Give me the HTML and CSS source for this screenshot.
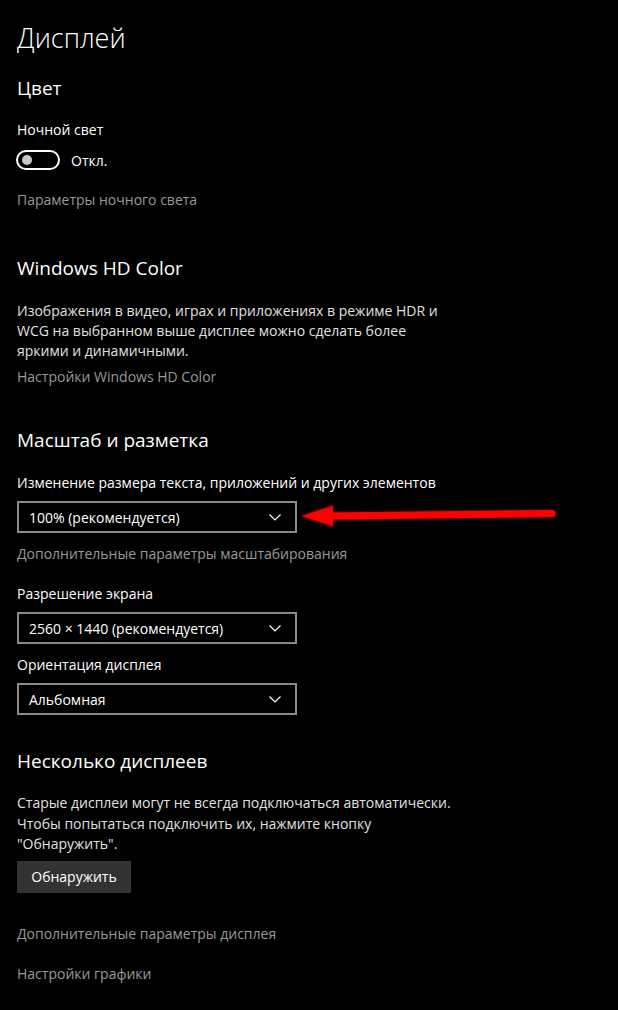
FILE: index.html
```html
<!DOCTYPE html>
<html lang="ru">
<head>
    <meta charset="UTF-8">
    <meta name="viewport" content="width=device-width, initial-scale=1.0">
    <title>Дисплей</title>
    <link rel="stylesheet" href="styles.css">
</head>
<body>
    <div class="page">
        <h1 class="title">Дисплей</h1>

        <h2 class="section s-color">Цвет</h2>
        <div class="label l-night">Ночной свет</div>
        <div class="toggle-row">
            <div class="toggle"><div class="knob"></div></div>
            <span>Откл.</span>
        </div>
        <div class="link l-nightset">Параметры ночного света</div>

        <h2 class="section s-hd">Windows HD Color</h2>
        <p class="text t-hd">Изображения в видео, играх и приложениях в режиме HDR и WCG на выбранном выше дисплее можно сделать более яркими и динамичными.</p>
        <div class="link l-hd">Настройки Windows HD Color</div>

        <h2 class="section s-scale">Масштаб и разметка</h2>
        <div class="label l-size">Изменение размера текста, приложений и других элементов</div>
        <div class="select-wrap">
            <div class="select">
                <span>100% (рекомендуется)</span>
                <svg class="chev" width="12" height="7" viewBox="0 0 12 7"><path d="M0.5 0.5 L6 6 L11.5 0.5" fill="none" stroke="#fff" stroke-width="1.2"/></svg>
            </div>
            <svg class="arrow" width="262" height="34" viewBox="0 0 262 34">
                <defs>
                    <filter id="glow" x="-10%" y="-50%" width="120%" height="200%">
                        <feGaussianBlur stdDeviation="1.2"/>
                    </filter>
                </defs>
                <g filter="url(#glow)" opacity="0.7">
                    <path d="M33 13.5 L252 11 L252 18 L33 20.5 Z" fill="#ff1010"/>
                    <circle cx="252" cy="14.5" r="3.5" fill="#ff1010"/>
                    <path d="M1 17 L33 6 L33 28 Z" fill="#ff1010"/>
                </g>
                <path d="M33 13.5 L252 11 L252 18 L33 20.5 Z" fill="#f00"/>
                <circle cx="252" cy="14.5" r="3.5" fill="#f00"/>
                <path d="M2 17 L33 7 L33 27 Z" fill="#f00"/>
            </svg>
        </div>
        <div class="link l-scale">Дополнительные параметры масштабирования</div>

        <div class="label l-res">Разрешение экрана</div>
        <div class="select">
            <span>2560 × 1440 (рекомендуется)</span>
            <svg class="chev" width="12" height="7" viewBox="0 0 12 7"><path d="M0.5 0.5 L6 6 L11.5 0.5" fill="none" stroke="#fff" stroke-width="1.2"/></svg>
        </div>

        <div class="label l-orient">Ориентация дисплея</div>
        <div class="select">
            <span>Альбомная</span>
            <svg class="chev" width="12" height="7" viewBox="0 0 12 7"><path d="M0.5 0.5 L6 6 L11.5 0.5" fill="none" stroke="#fff" stroke-width="1.2"/></svg>
        </div>

        <h2 class="section s-multi">Несколько дисплеев</h2>
        <p class="text t-multi">Старые дисплеи могут не всегда подключаться автоматически. Чтобы попытаться подключить их, нажмите кнопку "Обнаружить".</p>
        <div class="button">Обнаружить</div>

        <div class="link l-adv">Дополнительные параметры дисплея</div>
        <div class="link l-gfx">Настройки графики</div>
    </div>
</body>
</html>
```

FILE: styles.css
```css
body {
    margin: 0;
    background-color: #000;
    color: #fff;
    font-family: "Open Sans", "Noto Sans", sans-serif;
}
.page {
    padding: 20px 0 0 17px;
}
.title {
    margin: 0;
    font-size: 27px;
    font-weight: 300;
    line-height: 36px;
}
.section {
    margin: 0;
    font-size: 19px;
    font-weight: 400;
    line-height: 28px;
}
.label, .link, .text {
    font-size: 14px;
    line-height: 20px;
}
.link {
    color: #9a9a9a;
}
.text {
    margin: 0;
    color: #e0e0e0;
    width: 450px;
}
.t-hd {
    margin-top: 19px;
    width: 428px;
}
.s-color { margin-top: 18px; }
.l-night { margin-top: 18px; }
.toggle-row {
    margin-top: 10px;
    display: flex;
    align-items: center;
    gap: 11px;
    height: 20px;
    font-size: 14px;
}
.toggle {
    width: 36px;
    height: 16px;
    border: 2px solid #fff;
    border-radius: 10px;
    display: flex;
    align-items: center;
    padding-left: 4px;
    box-sizing: content-box;
    margin-left: -1px;
}
.knob {
    width: 10px;
    height: 10px;
    border-radius: 50%;
    background-color: #c8c8c8;
}
.l-nightset { margin-top: 20px; }
.s-hd { margin-top: 44px; }
.l-hd { margin-top: 6px; }
.s-scale { margin-top: 39px; }
.l-size { margin-top: 19px; }
.select-wrap {
    position: relative;
    margin-top: 8px;
}
.select {
    width: 252px;
    height: 28px;
    border: 2px solid #8a8a8a;
    display: flex;
    align-items: center;
    justify-content: space-between;
    padding: 0 14px 0 10px;
    box-sizing: content-box;
    font-size: 14px;
}
.chev {
    display: block;
}
.arrow {
    position: absolute;
    left: 283px;
    top: -2px;
}
.l-scale { margin-top: 11px; }
.l-res { margin-top: 20px; }
.l-res + .select { margin-top: 8px; }
.l-orient { margin-top: 11px; }
.l-orient + .select { margin-top: 8px; }
.s-multi { margin-top: 32px; }
.t-multi { margin-top: 18px; line-height: 20.5px; }
.button {
    margin-top: 6px;
    width: 114px;
    height: 32px;
    background-color: #333;
    display: flex;
    align-items: center;
    justify-content: center;
    font-size: 14px;
}
.l-adv { margin-top: 31px; }
.l-gfx { margin-top: 20px; }
```
